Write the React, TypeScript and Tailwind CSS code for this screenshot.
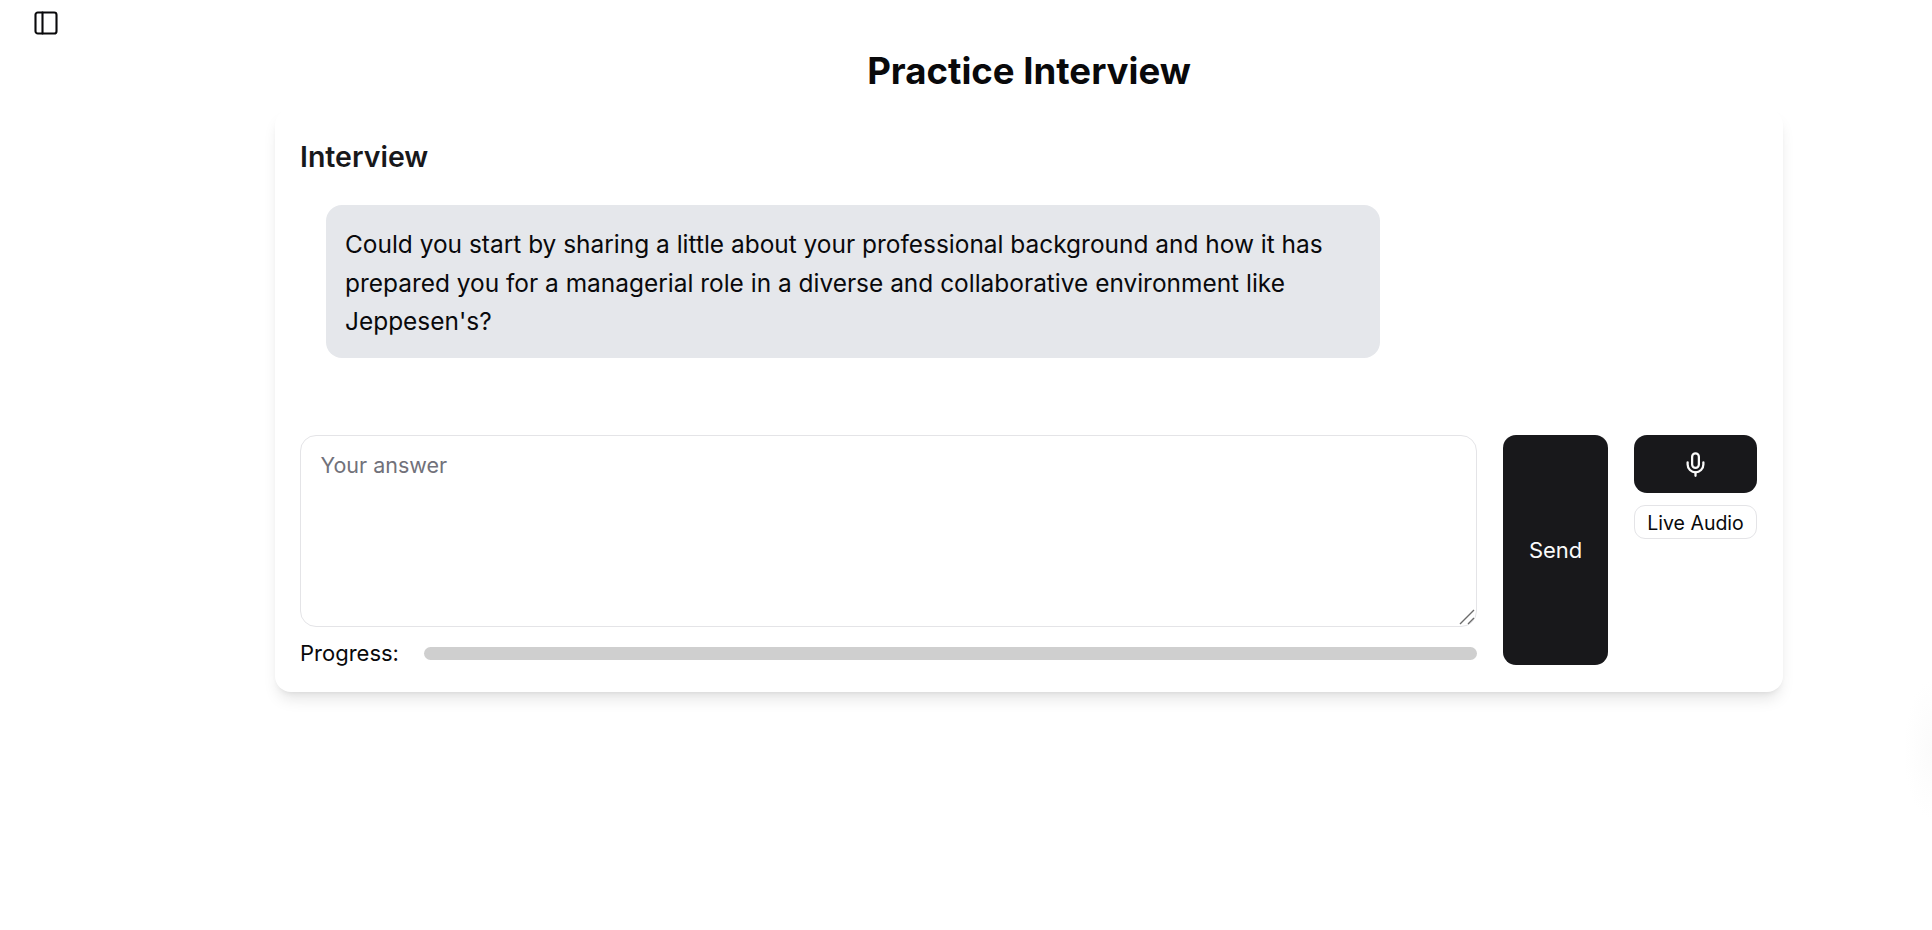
import React from 'react';
import { Mic, PanelLeft } from 'lucide-react';

const question =
  "Could you start by sharing a little about your professional background and how it has prepared you for a managerial role in a diverse and collaborative environment like Jeppesen's?";

const App = () => {
  return (
    <div className="flex h-[930px] w-full overflow-hidden bg-white bg-[radial-gradient(ellipse_28px_70px_at_100%_750px,#fbfbfb,transparent)] font-['Inter',sans-serif] text-[#09090b]">
      <div className="w-[126px] shrink-0 pl-[32px] pt-[9px]">
        <button className="flex size-[28px] items-center justify-center">
          <PanelLeft size={28} strokeWidth={1.8} className="text-[#09090b]" />
        </button>
      </div>

      <main className="flex flex-1 flex-col items-center pt-[48px]">
        <h1 className="mb-[15px] pt-[0.5px] text-[36.6px] font-bold leading-[45.5px] text-[#09090b]">
          Practice Interview
        </h1>

        <section className="flex h-[583px] w-[1508px] flex-col rounded-[16px] bg-white pb-[26px] pl-[25px] pr-[26px] pt-[30px] shadow-lg">
          <h2 className="text-[28.5px] font-semibold leading-[36px] text-[#18181b]">
            Interview
          </h2>

          <div className="ml-[26px] mt-[30px] w-[1054px] rounded-[16px] bg-[#e5e7eb] px-[19px] pb-[17.2px] pt-[20px] text-[24.45px] leading-[38.6px]">
            {question}
          </div>

          <div className="mt-[77.5px] flex gap-[26px]">
            <div className="flex w-[1178px] flex-col">
              <div className="relative h-[192px]">
                <textarea
                  placeholder="Your answer"
                  className="size-full resize-none rounded-[16px] border border-[#e4e4e7] bg-white px-[19.5px] pb-[16px] pt-[15px] text-[21.5px] leading-[28px] outline-none placeholder:text-[#71717a]"
                />
                <svg
                  width="16"
                  height="16"
                  viewBox="0 0 16 16"
                  className="absolute bottom-[2px] right-[2px] text-[#6b6b6b]"
                  fill="none"
                  stroke="currentColor"
                  strokeWidth="1.4"
                >
                  <path d="M1 15 L15 1 M9 15 L15 9" />
                </svg>
              </div>
              <div className="mt-[11px] flex items-center gap-[25.5px]">
                <span className="text-[22px] leading-[30px]">Progress:</span>
                <div className="h-[13px] flex-1 rounded-full bg-[#cfcfcf]" />
              </div>
            </div>

            <button className="h-[230px] w-[105px] rounded-[13px] bg-[#18181b] text-[22px] text-[#fafafa]">
              Send
            </button>

            <div className="flex w-[123px] flex-col gap-[12px]">
              <button className="flex h-[58px] items-center justify-center rounded-[13px] bg-[#18181b] text-[#fafafa]">
                <Mic size={27} strokeWidth={2} />
              </button>
              <button className="h-[34px] rounded-[11px] border border-[#e4e4e7] bg-white pt-[2px] text-[19.5px] leading-[24px]">
                Live Audio
              </button>
            </div>
          </div>
        </section>
      </main>
    </div>
  );
};

export default App;
